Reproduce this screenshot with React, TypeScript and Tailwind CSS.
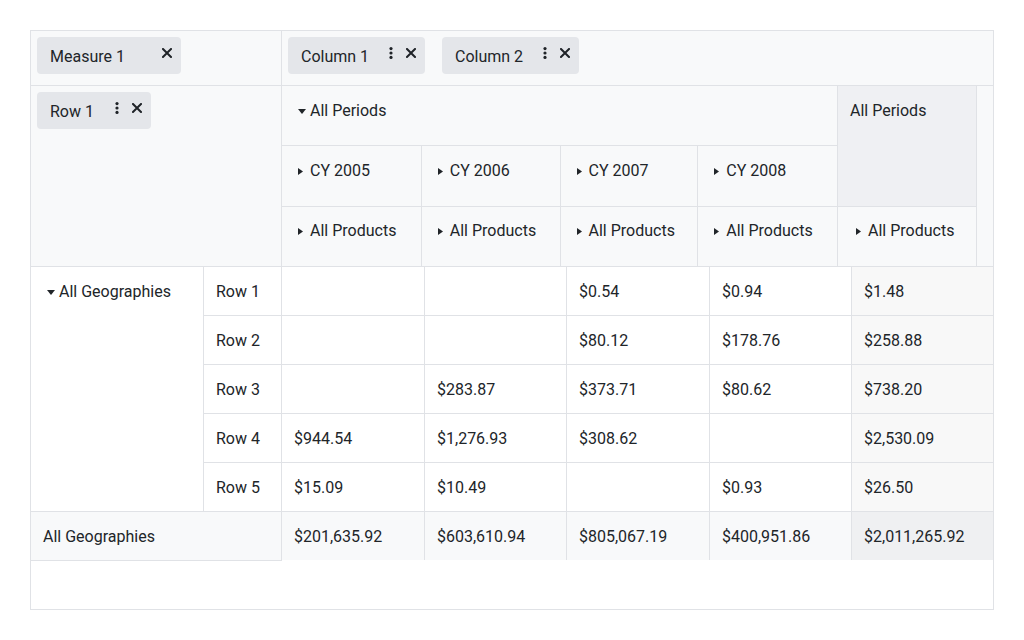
import React from "react";

const XIcon = () => (
  <svg width="10" height="10" viewBox="0 0 10 10">
    <path d="M1 1L9 9M9 1L1 9" stroke="#1f2328" strokeWidth="2" strokeLinecap="square" />
  </svg>
);

const Dots = () => (
  <svg width="4" height="12" viewBox="0 0 4 12">
    <circle cx="2" cy="1.6" r="1.6" fill="#1f2328" />
    <circle cx="2" cy="6" r="1.6" fill="#1f2328" />
    <circle cx="2" cy="10.4" r="1.6" fill="#1f2328" />
  </svg>
);

const Right = () => (
  <svg width="5" height="7" viewBox="0 0 5 7" className="mr-[7px] shrink-0">
    <path d="M0 0L5 3.5L0 7Z" fill="#212529" />
  </svg>
);

const Down = () => (
  <svg width="8" height="5" viewBox="0 0 8 5" className="mr-[4px] shrink-0">
    <path d="M0 0L8 0L4 5Z" fill="#212529" />
  </svg>
);

function Chip({ label, w, dots }: { label: string; w: string; dots: boolean }) {
  return (
    <div className={`h-[37px] ${w} rounded bg-[#e4e6ea] flex items-center pl-[13px] pr-[9px] shrink-0`}>
      <span className="leading-6 mt-[2px]">{label}</span>
      <div className="ml-auto flex items-center gap-[13px] -mt-[5px]">
        {dots && <Dots />}
        <XIcon />
      </div>
    </div>
  );
}

const rows = [
  ["", "", "$0.54", "$0.94", "$1.48"],
  ["", "", "$80.12", "$178.76", "$258.88"],
  ["", "$283.87", "$373.71", "$80.62", "$738.20"],
  ["$944.54", "$1,276.93", "$308.62", "", "$2,530.09"],
  ["$15.09", "$10.49", "", "$0.93", "$26.50"],
];
const totals = ["$201,635.92", "$603,610.94", "$805,067.19", "$400,951.86", "$2,011,265.92"];
const bodyW = ["w-[143px]", "w-[142px]", "w-[143px]", "w-[142px]", "w-[141px]"];
const cyW = ["w-[140px]", "w-[139px]", "w-[138px]", "w-[139px]"];
const years = ["CY 2005", "CY 2006", "CY 2007", "CY 2008"];

export default function App() {
  return (
    <div className="w-[1024px] h-[640px] bg-white pt-[30px] pl-[30px] font-['Roboto',sans-serif] text-[16px] text-[#212529]">
      <div className="w-[964px] h-[580px] border border-[#e0e2e6] flex flex-col">
        {/* top bar */}
        <div className="h-[55px] flex border-b border-[#e0e2e6] bg-[#f8f9fa]">
          <div className="w-[251px] border-r border-[#e0e2e6] pl-[6px] pt-[6px]">
            <Chip label="Measure 1" w="w-[144px]" dots={false} />
          </div>
          <div className="flex-1 pl-[6px] pt-[6px] flex gap-[17px]">
            <Chip label="Column 1" w="w-[137px]" dots />
            <Chip label="Column 2" w="w-[137px]" dots />
          </div>
        </div>
        {/* header */}
        <div className="h-[181px] flex border-b border-[#e0e2e6] bg-[#f8f9fa]">
          <div className="w-[251px] border-r border-[#e0e2e6] pl-[6px] pt-[6px]">
            <Chip label="Row 1" w="w-[114px]" dots />
          </div>
          <div className="w-[556px] flex flex-col border-r border-[#e0e2e6]">
            <div className="h-[60px] border-b border-[#e0e2e6] pl-[16px] pt-[13px] leading-6 flex items-start">
              <span className="flex items-center">
                <Down />
                All Periods
              </span>
            </div>
            <div className="h-[61px] border-b border-[#e0e2e6] flex">
              {years.map((y, i) => (
                <div
                  key={y}
                  className={`${cyW[i]} ${i < 3 ? "border-r border-[#e0e2e6]" : ""} pl-[16px] pt-[13px] leading-6`}
                >
                  <span className="flex items-center">
                    <Right />
                    {y}
                  </span>
                </div>
              ))}
            </div>
            <div className="flex-1 flex">
              {years.map((y, i) => (
                <div
                  key={y}
                  className={`${cyW[i]} ${i < 3 ? "border-r border-[#e0e2e6]" : ""} pl-[16px] pt-[12px] leading-6`}
                >
                  <span className="flex items-center">
                    <Right />
                    All Products
                  </span>
                </div>
              ))}
            </div>
          </div>
          <div className="w-[139px] flex flex-col border-r border-[#e0e2e6]">
            <div className="h-[121px] bg-[#eff0f3] border-b border-[#e0e2e6] pl-[12px] pt-[13px] leading-6">All Periods</div>
            <div className="flex-1 pl-[18px] pt-[12px] leading-6">
              <span className="flex items-center">
                <Right />
                All Products
              </span>
            </div>
          </div>
          <div className="flex-1" />
        </div>
        {/* body */}
        <div className="flex">
          <div className="w-[173px] h-[245px] border-r border-b border-[#e0e2e6] pl-[16px] pt-[13px] leading-6">
            <span className="flex items-center">
              <Down />
              All Geographies
            </span>
          </div>
          <div className="flex flex-col">
            {rows.map((r, ri) => (
              <div key={ri} className="h-[49px] flex border-b border-[#e0e2e6]">
                <div className="w-[78px] border-r border-[#e0e2e6] pl-[12px] pt-[2px] flex items-center">Row {ri + 1}</div>
                {r.map((v, ci) => (
                  <div
                    key={ci}
                    className={`${bodyW[ci]} ${ci < 4 ? "border-r border-[#e0e2e6]" : "bg-[#f8f8f8]"} pl-[12px] pt-[2px] flex items-center`}
                  >
                    {v}
                  </div>
                ))}
              </div>
            ))}
          </div>
        </div>
        {/* totals */}
        <div className="flex">
          <div className="w-[251px] h-[49px] border-r border-b border-[#e0e2e6] bg-[#f8f9fa] pl-[12px] pt-[2px] flex items-center">
            All Geographies
          </div>
          {totals.map((v, ci) => (
            <div
              key={ci}
              className={`${bodyW[ci]} h-[48px] ${ci < 4 ? "border-r border-[#e0e2e6] bg-[#f8f9fa]" : "bg-[#eff0f2]"} pl-[12px] pt-[2px] flex items-center`}
            >
              {v}
            </div>
          ))}
        </div>
      </div>
    </div>
  );
}
